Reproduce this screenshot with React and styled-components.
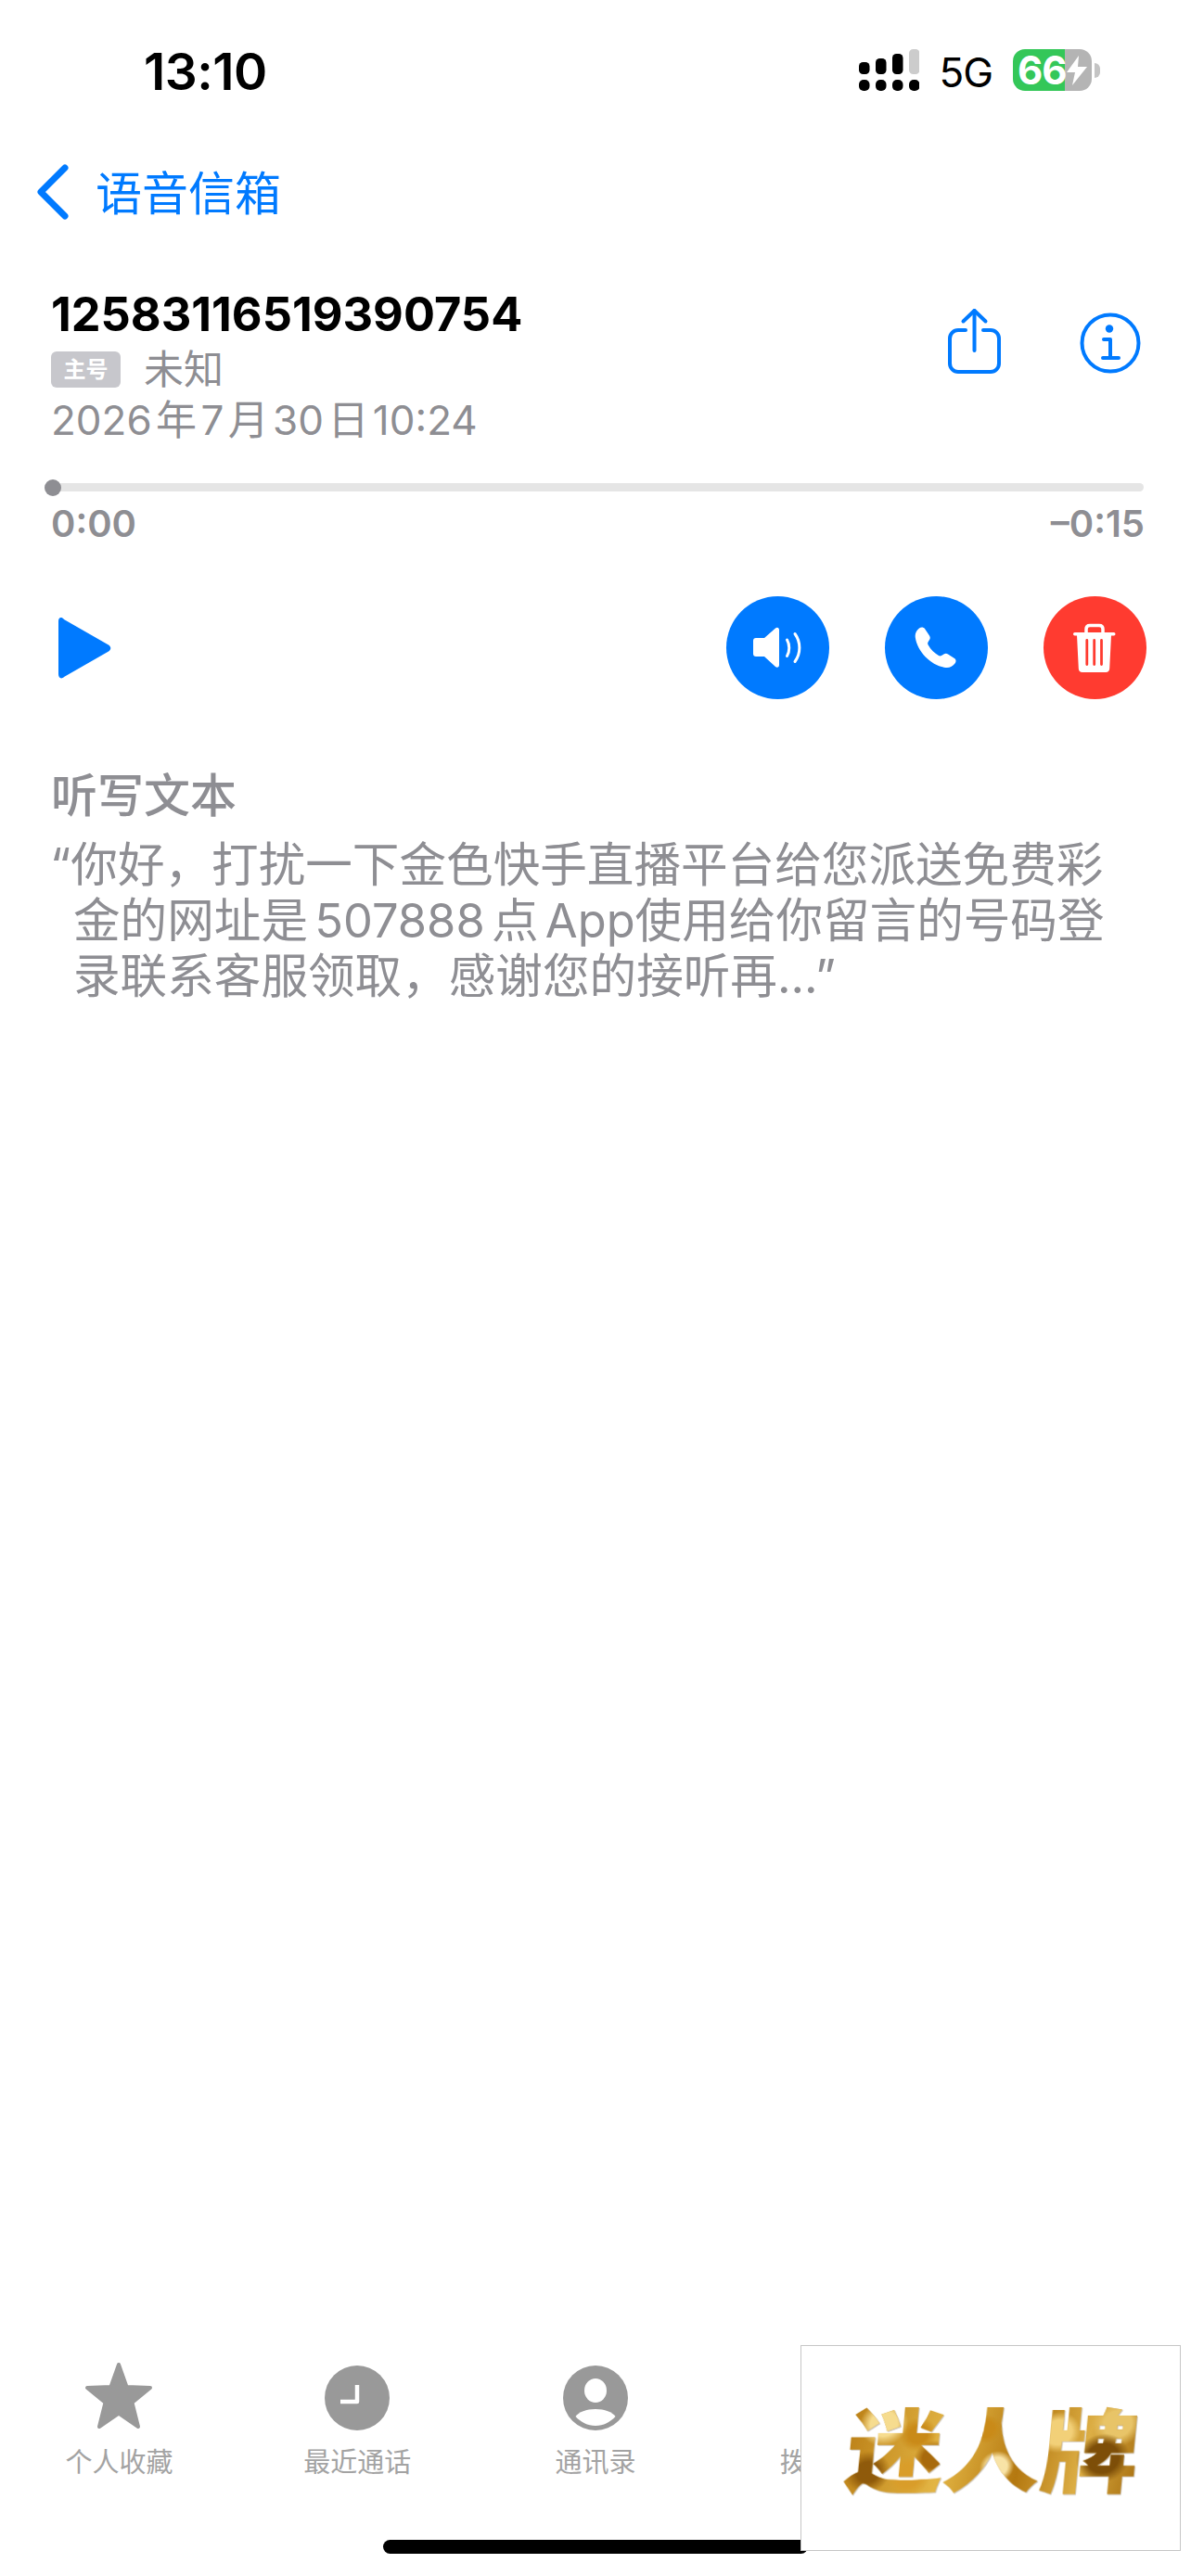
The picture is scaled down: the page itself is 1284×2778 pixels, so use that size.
import styled, { createGlobalStyle } from "styled-components";

const GlobalStyle = createGlobalStyle`
  html, body {
    margin: 0;
    padding: 0;
    background: #fff;
  }
  * { box-sizing: border-box; }
`;

const BLUE = "#007aff";
const GREY = "#8e8e93";
const FONT = `Inter, "Noto Sans CJK SC", "Liberation Sans", sans-serif`;

const Page = styled.div`
  position: relative;
  width: 1284px;
  height: 2778px;
  overflow: hidden;
  display: flex;
  flex-direction: column;
  font-family: ${FONT};
  background: #fff;
`;

const StatusBar = styled.div`
  height: 168px;
  padding: 50px 98px 0 155px;
  display: flex;
  justify-content: space-between;
  align-items: flex-start;
`;

const Clock = styled.div`
  font-size: 55px;
  line-height: 54px;
  font-weight: 600;
  letter-spacing: -0.5px;
  color: #000;
`;

const StatusIcons = styled.div`
  display: flex;
  align-items: flex-start;
  padding-top: 3px;
`;

const Carrier = styled.div`
  margin: 1px 22px 0 21px;
  font-size: 44px;
  line-height: 48px;
  font-weight: 400;
  letter-spacing: -1px;
  color: #000;
`;

const Battery = styled.div`
  position: relative;
  width: 85px;
  height: 45px;
  border-radius: 13px;
  background: linear-gradient(to right, #34c759 66%, #b4b4b4 66%);
  color: #fff;
  font-size: 42px;
  line-height: 45px;
  font-weight: 700;
  padding-left: 5px;
  letter-spacing: -1px;
`;

const BatteryBolt = styled.svg`
  position: absolute;
  right: 3px;
  top: 7px;
`;

const BatteryNub = styled.div`
  width: 6px;
  height: 16px;
  margin: 15px 0 0 3px;
  background: #c4c4c4;
  border-radius: 0 8px 8px 0;
`;

const NavBar = styled.div`
  height: 141px;
  padding-left: 39px;
  display: flex;
  align-items: flex-start;
  gap: 29px;
  color: ${BLUE};
`;

const BackChevron = styled.svg`
  margin-top: 9px;
`;

const NavLabel = styled.div`
  font-size: 50px;
  line-height: 66px;
  margin-top: 8px;
`;

const Details = styled.div`
  padding: 0 54px 0 55px;
  display: flex;
  justify-content: space-between;
  align-items: flex-start;
`;

const Caller = styled.div`
  display: flex;
  flex-direction: column;
`;

const PhoneNumber = styled.div`
  font-size: 50.5px;
  line-height: 60px;
  font-weight: 700;
  color: #000;
`;

const SubRow = styled.div`
  display: flex;
  align-items: center;
  gap: 25px;
  height: 58px;
`;

const Badge = styled.span`
  width: 75px;
  height: 39px;
  border-radius: 6px;
  background: #c7c7cc;
  color: #fff;
  font-size: 24px;
  font-weight: 700;
  line-height: 39px;
  text-align: center;
`;

const CallerName = styled.div`
  font-size: 43px;
  line-height: 58px;
  color: ${GREY};
`;

const CallDate = styled.div`
  margin-top: -3px;
  font-size: 44px;
  line-height: 58px;
  color: ${GREY};
  word-spacing: -8px;
`;

const HeaderActions = styled.div`
  display: flex;
  align-items: flex-start;
  gap: 85px;
  padding-top: 23px;
`;

const InfoWrap = styled.div`
  margin-top: 5px;
`;

const Scrubber = styled.div`
  margin: 39px 51px 0 55px;
  position: relative;
  height: 9px;
  background: #e5e5e5;
  border-radius: 5px;
`;

const ScrubThumb = styled.div`
  position: absolute;
  left: -7px;
  top: -4.5px;
  width: 18px;
  height: 18px;
  border-radius: 50%;
  background: ${GREY};
`;

const TimeRow = styled.div`
  margin: 13px 50px 0 55px;
  display: flex;
  justify-content: space-between;
  font-size: 40px;
  line-height: 44px;
  font-weight: 600;
  color: ${GREY};
`;

const Controls = styled.div`
  margin-top: 56px;
  padding: 0 48px 0 62px;
  display: flex;
  justify-content: space-between;
  align-items: center;
`;

const RoundButtons = styled.div`
  display: flex;
  gap: 60px;
`;

const RoundButton = styled.div`
  width: 111px;
  height: 111px;
  border-radius: 50%;
  background: ${(p) => p.$color};
  display: flex;
`;

const Transcript = styled.div`
  margin-top: 71px;
  padding: 0 40px 0 55px;
`;

const TranscriptTitle = styled.div`
  font-size: 50px;
  line-height: 66px;
  font-weight: 500;
  color: ${GREY};
`;

const TranscriptBody = styled.div`
  margin-top: 12px;
  padding-left: 24px;
  text-indent: -25px;
  font-size: 50.6px;
  line-height: 60px;
  color: ${GREY};
  white-space: nowrap;
  word-spacing: -7px;
`;

const Spacer = styled.div`
  flex: 1;
`;

const TabBar = styled.div`
  display: grid;
  grid-template-columns: repeat(5, 1fr);
`;

const Tab = styled.div`
  display: flex;
  flex-direction: column;
  align-items: center;
`;

const TabIcon = styled.div`
  height: 76px;
  display: flex;
  align-items: flex-end;
`;

const TabLabel = styled.div`
  margin-top: 18px;
  font-size: 29px;
  line-height: 34px;
  color: #a3a3a3;
`;

const HomeIndicator = styled.div`
  width: 458px;
  height: 15px;
  margin: 66px 0 24px 413px;
  border-radius: 8px;
  background: #000;
`;

const AdCard = styled.div`
  position: absolute;
  left: 863px;
  top: 2529px;
  width: 410px;
  height: 222px;
  background: #fff;
  border: 1.5px solid #c6c6c6;
  display: flex;
  justify-content: center;
`;

const AdText = styled.div`
  margin-top: 44px;
  font-family: "Noto Sans CJK SC", sans-serif;
  font-size: 106px;
  line-height: 126px;
  height: 126px;
  font-weight: 900;
  letter-spacing: -1px;
  transform: translateX(2px) scaleY(0.92) skewX(-5deg);
  color: transparent;
  background:
    radial-gradient(circle at 12% 30%, #f6dc8f 0 5%, transparent 9%),
    radial-gradient(circle at 8% 75%, #8f5a0b 0 4%, transparent 8%),
    radial-gradient(circle at 30% 62%, #a86a0c 0 5%, transparent 9%),
    radial-gradient(circle at 24% 40%, #c98a18 0 4%, transparent 8%),
    radial-gradient(circle at 52% 70%, #f8e3a6 0 6%, transparent 10%),
    radial-gradient(circle at 47% 35%, #c98a18 0 5%, transparent 9%),
    radial-gradient(circle at 60% 48%, #8f5a0b 0 3%, transparent 7%),
    radial-gradient(circle at 72% 38%, #f2d078 0 6%, transparent 10%),
    radial-gradient(circle at 88% 62%, #7d4e08 0 6%, transparent 10%),
    radial-gradient(circle at 92% 30%, #e8c468 0 5%, transparent 9%),
    radial-gradient(circle at 22% 78%, #d99d2a 0 5%, transparent 9%),
    linear-gradient(100deg, #b97d14, #e3b544 35%, #b47810 60%, #dcae45 80%, #a87010);
  -webkit-background-clip: text;
  background-clip: text;
  filter: drop-shadow(1px 1px 0 rgba(120, 100, 70, 0.35));
`;

function SignalBars() {
  const bars = [
    { x: 0, top: 14, color: "#000" },
    { x: 18, top: 10, color: "#000" },
    { x: 36, top: 5, color: "#000" },
    { x: 54, top: 0, color: "#ccc" },
  ];
  return (
    <svg width="65" height="46" viewBox="0 0 65 46">
      {bars.map((b) => (
        <g key={b.x}>
          <rect x={b.x} y={b.top} width="11.5" height={27 - b.top} rx="4.5" fill={b.color} />
          <rect x={b.x} y="33" width="11.5" height="12" rx="5" fill="#000" />
        </g>
      ))}
    </svg>
  );
}

function ShareIcon() {
  return (
    <svg width="57" height="72" viewBox="0 0 57 72" fill="none" stroke={BLUE} strokeWidth="4" strokeLinecap="round" strokeLinejoin="round">
      <path d="M19 24H11a9 9 0 0 0-9 9v27a9 9 0 0 0 9 9h35a9 9 0 0 0 9-9V33a9 9 0 0 0-9-9h-8" />
      <path d="M28.5 46V3" />
      <path d="M16.5 14.5 28.5 3l12 11.5" />
    </svg>
  );
}

function InfoIcon() {
  return (
    <svg width="66" height="66" viewBox="0 0 66 66" fill="none">
      <circle cx="33" cy="33" r="30.5" stroke={BLUE} strokeWidth="4" />
      <circle cx="32" cy="17.5" r="4.2" fill={BLUE} />
      <path d="M26 29h7v20M25 49h17" stroke={BLUE} strokeWidth="4" strokeLinecap="round" strokeLinejoin="round" />
    </svg>
  );
}

function PlayIcon() {
  return (
    <svg width="58" height="68" viewBox="0 0 58 68">
      <path d="M1 5C1 1 4-0.5 7 3l48 27.500c3 2 3 5 0 7L7 65c-3 3-6 1-6-3Z" fill={BLUE} />
    </svg>
  );
}

function SpeakerIcon() {
  return (
    <svg width="111" height="111" viewBox="0 0 111 111" fill="none">
      <path d="M32 45h9l12-10.500c2-1.500 4-.5 4 2v37.500c0 2.500-2 3.500-4 2L41 65h-9c-2 0-3-1-3-3V48c0-2 1-3 3-3Z" fill="#fff" />
      <path d="M65.500 47c3 5 3 12.500 0 17.500" stroke="#fff" strokeWidth="3" strokeLinecap="round" />
      <path d="M74 40.500c6.500 9 6.500 21 0 30" stroke="#fff" strokeWidth="3" strokeLinecap="round" />
    </svg>
  );
}

function PhoneIcon() {
  return (
    <svg width="111" height="111" viewBox="0 0 111 111">
      <path
        d="M37 34.500C39 33 41.500 33.200 43 35L48 42.500C49 44 49 45.500 48 47L46.500 49.500C46 50.500 46 51.500 46.800 52.800C49.500 57.500 53.500 61.500 58 64C59 64.600 60 64.600 61 64L63.500 62.400C65 61.500 66.500 61.500 68 62.400L75 67C76.800 68.200 77 70.500 75.700 72.300C73 76 69.500 77.500 65.500 77C50 75 35 60 32.800 44.500C32.200 40.500 33.800 37 37 34.500Z"
        fill="#fff"
      />
    </svg>
  );
}

function TrashIcon() {
  return (
    <svg width="111" height="111" viewBox="0 0 111 111" fill="none">
      <path d="M46 40v-4.500c0-2.500 1.500-4 4-4h10c2.500 0 4 1.500 4 4V40" stroke="#fff" strokeWidth="3.500" />
      <rect x="32" y="39" width="45.500" height="3.500" rx="1.700" fill="#fff" />
      <path d="M36 42h37l-1.800 36c-.1 2.500-1.700 4-4 4H41.800c-2.300 0-3.900-1.500-4-4Z" fill="#fff" />
      <path d="M46.800 47.500v26M54.700 47.500v26M62.500 47.500v26" stroke="#ff3b30" strokeWidth="2.800" strokeLinecap="round" />
    </svg>
  );
}

function StarTab() {
  return (
    <svg width="78" height="74" viewBox="0 0 78 74">
      <path
        d="M39 3 47.500 27 73 28 53.500 44 60 70 39 55.500 18 70 24.500 44 5 28 30.500 27Z"
        fill="#999"
        stroke="#999"
        strokeWidth="4"
        strokeLinejoin="round"
      />
    </svg>
  );
}

function ClockTab() {
  return (
    <svg width="70" height="70" viewBox="0 0 70 70">
      <circle cx="35" cy="35" r="35" fill="#999" />
      <path d="M35 21v18H17" fill="none" stroke="#fff" strokeWidth="4.500" strokeLinejoin="round" />
    </svg>
  );
}

function ContactTab() {
  return (
    <svg width="70" height="70" viewBox="0 0 70 70">
      <circle cx="35" cy="35" r="35" fill="#999" />
      <ellipse cx="35" cy="27" rx="12" ry="13" fill="#fff" />
      <path d="M13.500 55C17 50 25 47 35 47C45 47 53 50 56.500 55C51 61 43.500 65 35 65C26.500 65 19 61 13.500 55Z" fill="#fff" />
    </svg>
  );
}

function KeypadTab() {
  const dots = [];
  for (let r = 0; r < 4; r++) {
    for (let c = 0; c < 3; c++) {
      if (r === 3 && c !== 1) continue;
      dots.push(<circle key={`${r}-${c}`} cx={8 + c * 27} cy={8 + r * 20} r="8" fill="#999" />);
    }
  }
  return (
    <svg width="70" height="76" viewBox="0 0 70 76">
      {dots}
    </svg>
  );
}

function VoicemailTab() {
  return (
    <svg width="80" height="40" viewBox="0 0 80 40" fill="none" stroke="#999" strokeWidth="6">
      <circle cx="20" cy="20" r="15" />
      <circle cx="60" cy="20" r="15" />
      <path d="M20 35h40" />
    </svg>
  );
}

const TABS = [
  { label: "个人收藏", icon: <StarTab /> },
  { label: "最近通话", icon: <ClockTab /> },
  { label: "通讯录", icon: <ContactTab /> },
  { label: "拨号键盘", icon: <KeypadTab /> },
  { label: "语音留言", icon: <VoicemailTab /> },
];

export default function App() {
  return (
    <Page>
      <GlobalStyle />
      <StatusBar>
        <Clock>13:10</Clock>
        <StatusIcons>
          <SignalBars />
          <Carrier>5G</Carrier>
          <Battery>
            66
            <BatteryBolt width="26" height="32" viewBox="0 0 26 32">
              <path d="M15 0 2 18h9L8 32 24 12h-10Z" fill="#fff" />
            </BatteryBolt>
          </Battery>
          <BatteryNub />
        </StatusIcons>
      </StatusBar>

      <NavBar>
        <BackChevron width="35" height="60" viewBox="0 0 35 60" fill="none">
          <path d="M31 4 5 30l26 26" stroke={BLUE} strokeWidth="7" strokeLinecap="round" strokeLinejoin="round" />
        </BackChevron>
        <NavLabel>语音信箱</NavLabel>
      </NavBar>

      <Details>
        <Caller>
          <PhoneNumber>12583116519390754</PhoneNumber>
          <SubRow>
            <Badge>主号</Badge>
            <CallerName>未知</CallerName>
          </SubRow>
          <CallDate>2026 年 7 月 30 日 10:24</CallDate>
        </Caller>
        <HeaderActions>
          <ShareIcon />
          <InfoWrap>
            <InfoIcon />
          </InfoWrap>
        </HeaderActions>
      </Details>

      <Scrubber>
        <ScrubThumb />
      </Scrubber>
      <TimeRow>
        <span>0:00</span>
        <span>–0:15</span>
      </TimeRow>

      <Controls>
        <PlayIcon />
        <RoundButtons>
          <RoundButton $color={BLUE}>
            <SpeakerIcon />
          </RoundButton>
          <RoundButton $color={BLUE}>
            <PhoneIcon />
          </RoundButton>
          <RoundButton $color="#ff3b30">
            <TrashIcon />
          </RoundButton>
        </RoundButtons>
      </Controls>

      <Transcript>
        <TranscriptTitle>听写文本</TranscriptTitle>
        <TranscriptBody>
          “你好，打扰一下金色快手直播平台给您派送免费彩
          <br />
          金的网址是 507888 点 App使用给你留言的号码登
          <br />
          录联系客服领取，感谢您的接听再...”
        </TranscriptBody>
      </Transcript>

      <Spacer />

      <TabBar>
        {TABS.map((t) => (
          <Tab key={t.label}>
            <TabIcon>{t.icon}</TabIcon>
            <TabLabel>{t.label}</TabLabel>
          </Tab>
        ))}
      </TabBar>
      <HomeIndicator />

      <AdCard>
        <AdText>迷人牌</AdText>
      </AdCard>
    </Page>
  );
}
